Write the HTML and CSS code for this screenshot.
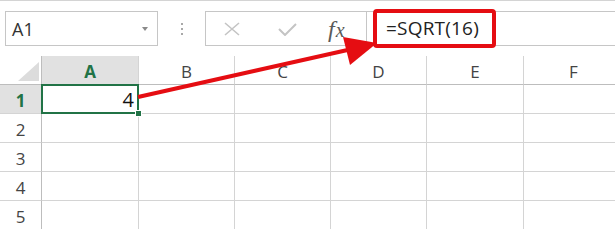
FILE: index.html
```html
<!DOCTYPE html>
<html>
<head>
<meta charset="utf-8">
<link rel="stylesheet" href="styles.css">
</head>
<body>
<div class="page">
  <div class="toolbar">
    <div class="namebox">
      <span class="name">A1</span>
      <span class="caret"></span>
    </div>
    <div class="grip"><i></i><i></i><i></i></div>
    <div class="buttons">
      <svg class="icon" width="18" height="14" viewBox="0 0 18 14"><path d="M2 1 L16 13 M16 1 L2 13" stroke="#c4c4c4" stroke-width="1.6" fill="none"/></svg>
      <svg class="icon" width="20" height="14" viewBox="0 0 20 14"><path d="M2 7 L8 13 L19 2" stroke="#c4c4c4" stroke-width="2" fill="none"/></svg>
      <span class="fx"><span class="f">f</span><span class="x">x</span></span>
    </div>
    <div class="formula"><span class="ftext">=SQRT(16)</span></div>
  </div>
  <div class="grid">
    <div class="corner"><span class="tri"></span></div>
    <div class="ch sel">A</div>
    <div class="ch">B</div>
    <div class="ch">C</div>
    <div class="ch">D</div>
    <div class="ch">E</div>
    <div class="ch">F</div>

    <div class="rh sel">1</div>
    <div class="cell active">4</div>
    <div class="cell"></div><div class="cell"></div><div class="cell"></div><div class="cell"></div><div class="cell"></div>

    <div class="rh">2</div>
    <div class="cell"></div><div class="cell"></div><div class="cell"></div><div class="cell"></div><div class="cell"></div><div class="cell"></div>

    <div class="rh">3</div>
    <div class="cell"></div><div class="cell"></div><div class="cell"></div><div class="cell"></div><div class="cell"></div><div class="cell"></div>

    <div class="rh">4</div>
    <div class="cell"></div><div class="cell"></div><div class="cell"></div><div class="cell"></div><div class="cell"></div><div class="cell"></div>

    <div class="rh">5</div>
    <div class="cell"></div><div class="cell"></div><div class="cell"></div><div class="cell"></div><div class="cell"></div><div class="cell"></div>
  </div>
  <div class="highlight"></div>
  <svg class="arrow" width="615" height="229" viewBox="0 0 615 229">
    <line x1="138" y1="97" x2="352" y2="49" stroke="#e50d12" stroke-width="4"/>
    <polygon points="377,43 343,37 350,65" fill="#e50d12"/>
  </svg>
</div>
</body>
</html>
```
FILE: styles.css
```css
html, body {
  margin: 0;
  padding: 0;
  background: #fff;
}
.page {
  position: relative;
  width: 615px;
  height: 229px;
  overflow: hidden;
  font-family: "Open Sans", "Noto Sans", sans-serif;
  border-top: 1px solid #d4d4d4;
  box-sizing: border-box;
}
.toolbar {
  display: flex;
  align-items: center;
  height: 55px;
  padding-left: 5px;
  box-sizing: border-box;
}
.namebox {
  width: 153px;
  height: 35px;
  box-sizing: border-box;
  border: 1px solid #c6c6c6;
  display: flex;
  align-items: center;
  justify-content: space-between;
  padding: 0 9px 0 6px;
}
.name {
  font-size: 18px;
  color: #333;
  line-height: 1;
}
.caret {
  width: 0;
  height: 0;
  border-left: 3.5px solid transparent;
  border-right: 3.5px solid transparent;
  border-top: 4px solid #8a8a8a;
}
.grip {
  width: 47px;
  display: flex;
  flex-direction: column;
  align-items: center;
  gap: 3px;
}
.grip i {
  display: block;
  width: 2px;
  height: 2px;
  background: #a8a8a8;
}
.buttons {
  width: 162px;
  height: 35px;
  box-sizing: border-box;
  border: 1px solid #c6c6c6;
  display: flex;
  align-items: center;
  padding-left: 17px;
}
.buttons .icon {
  display: block;
}
.buttons .icon:nth-child(2) {
  margin-left: 36px;
}
.fx {
  margin-left: 31px;
  font-family: "Liberation Serif", "DejaVu Serif", serif;
  font-style: italic;
  color: #5a5a5a;
  line-height: 1;
  display: flex;
  align-items: baseline;
}
.fx .f {
  font-size: 24px;
}
.fx .x {
  font-size: 20px;
  margin-left: 1px;
}
.formula {
  flex: 1;
  height: 35px;
  box-sizing: border-box;
  border-top: 1px solid #c6c6c6;
  border-bottom: 1px solid #c6c6c6;
  display: flex;
  align-items: center;
  padding-left: 19px;
}
.ftext {
  font-size: 19px;
  color: #222;
  line-height: 1;
  letter-spacing: 0.2px;
}
.grid {
  display: grid;
  grid-template-columns: 42px 97px 96px 96px 96px 97px 100px;
  grid-template-rows: 29px repeat(5, 29px);
}
.grid > div {
  box-sizing: border-box;
  border-right: 1px solid #d4d4d4;
  border-bottom: 1px solid #d4d4d4;
}
.corner {
  position: relative;
  border-right-color: #bdbdbd !important;
  border-bottom-color: #bdbdbd !important;
}
.tri {
  position: absolute;
  right: 2px;
  bottom: 3px;
  width: 0;
  height: 0;
  border-left: 21px solid transparent;
  border-bottom: 19px solid #dcdcdc;
}
.ch {
  display: flex;
  align-items: center;
  justify-content: center;
  font-size: 17px;
  color: #444;
  border-bottom-color: #bdbdbd !important;
  padding-top: 3px;
}
.rh {
  display: flex;
  align-items: center;
  justify-content: center;
  font-size: 17px;
  color: #444;
  border-right-color: #bdbdbd !important;
  padding-top: 2px;
}
.ch.sel, .rh.sel {
  background: #e1e1e1;
  color: #217346;
  font-weight: bold;
}
.cell {
  font-size: 20px;
  color: #111;
  display: flex;
  align-items: center;
  justify-content: flex-end;
  padding-right: 4px;
}
.cell.active {
  position: relative;
}
.cell.active::before {
  content: "";
  position: absolute;
  left: -1px;
  top: -1px;
  right: -1px;
  bottom: -1px;
  border: 2px solid #217346;
}
.cell.active::after {
  content: "";
  position: absolute;
  right: -4px;
  bottom: -4px;
  width: 5px;
  height: 5px;
  background: #217346;
  border: 1px solid #fff;
}
.highlight {
  position: absolute;
  left: 373px;
  top: 8px;
  width: 123px;
  height: 39px;
  box-sizing: border-box;
  border: 4px solid #e50d12;
  border-radius: 4px;
}
.arrow {
  position: absolute;
  left: 0;
  top: -1px;
}
```
